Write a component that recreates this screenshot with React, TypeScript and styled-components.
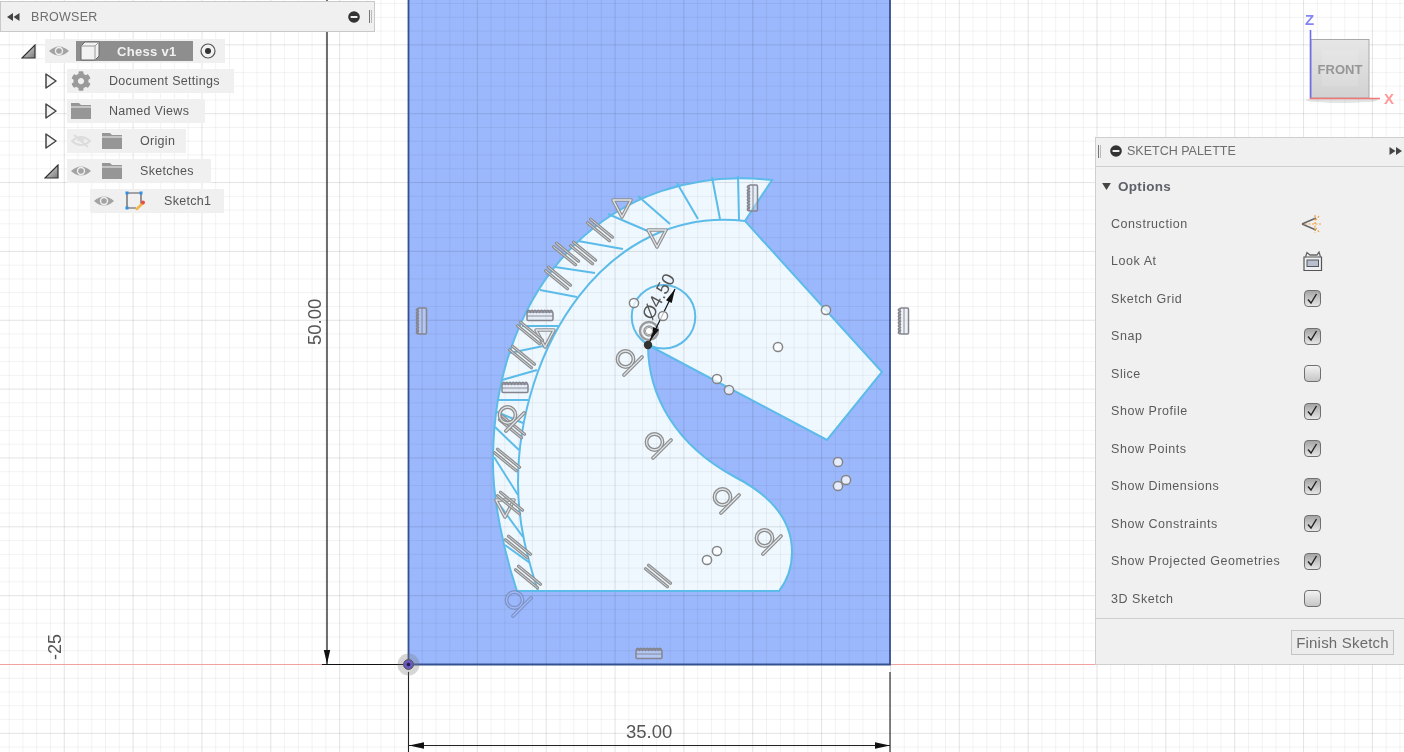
import React from 'react';
import styled, { createGlobalStyle } from 'styled-components';
import { FaCog } from 'react-icons/fa';

const GlobalStyle = createGlobalStyle`
  html, body {
    margin: 0;
    padding: 0;
    background: #fff;
    overflow: hidden;
  }
  body {
    font-family: "Liberation Sans", Arial, sans-serif;
  }
`;

const Viewport = styled.div`
  position: relative;
  width: 1404px;
  height: 752px;
  overflow: hidden;
  background: #fff;
  filter: blur(0.4px);
`;

const Canvas = styled.svg`
  position: absolute;
  inset: 0;
  display: block;
`;

const DimText = styled.text<{ $size?: number }>`
  font-family: "Liberation Sans", Arial, sans-serif;
  font-size: ${p => p.$size ?? 18.5}px;
  fill: #555;
`;

const CubeText = styled.text`
  font-family: "Liberation Sans", Arial, sans-serif;
  font-size: 13px;
  font-weight: 700;
  fill: #969696;
`;

const AxisText = styled.text<{ $color: string }>`
  font-family: "Liberation Sans", Arial, sans-serif;
  font-size: 15px;
  font-weight: 700;
  fill: ${p => p.$color};
`;

/* browser panel */
const BrowserPanel = styled.aside`
  position: absolute;
  left: 0;
  top: 1px;
  width: 375px;
`;

const BrowserHeader = styled.header`
  box-sizing: border-box;
  height: 31px;
  display: flex;
  align-items: center;
  padding: 0 2px 0 6px;
  background: #f0f0f0;
  border: 1px solid #c9c9c9;
  color: #6e6e6e;
  font-size: 12.5px;
  letter-spacing: 0.3px;
`;

const HeaderTitle = styled.span`
  flex: 1;
  margin-left: 11px;
`;

const Grip = styled.span`
  box-sizing: border-box;
  width: 3px;
  height: 13px;
  margin-left: 9px;
  border-left: 1px solid #777;
  border-right: 1px solid #bbb;
`;

const PaletteGrip = styled(Grip)`
  margin: 0 9px 0 2px;
`;

const Tree = styled.div`
  display: flex;
  flex-direction: column;
  gap: 6px;
  margin-top: 7px;
`;

const TreeRow = styled.div<{ $indent: number }>`
  display: flex;
  align-items: center;
  height: 24px;
  margin-left: ${p => p.$indent}px;
`;

const Expander = styled.span<{ $width: number }>`
  display: flex;
  align-items: center;
  width: ${p => p.$width}px;
`;

const RowBody = styled.div<{ $gap?: number; $end?: number }>`
  display: flex;
  align-items: center;
  gap: ${p => p.$gap ?? 11}px;
  height: 24px;
  padding: 0 ${p => p.$end ?? 14}px 0 4px;
  background: #f0f0f0;
  color: #555;
  font-size: 12.5px;
  letter-spacing: 0.3px;
  white-space: nowrap;
`;

const RowLabel = styled.span`
  margin-left: 7px;
`;

const RootBlock = styled.div`
  display: flex;
  align-items: center;
  box-sizing: border-box;
  width: 117px;
  height: 20px;
  padding-left: 4px;
  background: #8e8e8e;
  color: #f1f1f1;
  font-size: 13px;
  font-weight: 700;
  letter-spacing: 0.3px;
`;

const RootLabel = styled.span`
  margin-left: 17px;
`;

const GearIcon = styled(FaCog)`
  width: 20px;
  height: 20px;
  color: #9a9a9a;
`;

/* sketch palette */
const Palette = styled.aside`
  position: absolute;
  left: 1095px;
  top: 137px;
  box-sizing: border-box;
  width: 309px;
  height: 528px;
  background: #f0f0f0;
  border: 1px solid #cfcfcf;
  border-right: none;
  display: flex;
  flex-direction: column;
  color: #5b5b5b;
  font-size: 12.5px;
  letter-spacing: 0.55px;
`;

const PaletteHeader = styled.header`
  box-sizing: border-box;
  flex: 0 0 29px;
  display: flex;
  align-items: center;
  padding: 0 2px 2px 0;
  border-bottom: 1px solid #cfcfcf;
  color: #6e6e6e;
`;

const PaletteTitle = styled.span`
  flex: 1;
  margin-left: 5px;
  letter-spacing: 0;
`;

const SectionTitle = styled.div`
  flex: 0 0 38px;
  display: flex;
  align-items: center;
  gap: 7px;
  padding-left: 6px;
  font-size: 13.5px;
  font-weight: 700;
  letter-spacing: 0.3px;
  color: #5f6068;
`;

const OptionList = styled.div`
  display: grid;
  grid-auto-rows: 37.5px;
`;

const OptionRow = styled.div`
  display: grid;
  grid-template-columns: 189px 24px;
  align-items: center;
  padding-left: 15px;
`;

const OptionControl = styled.span`
  display: flex;
  justify-content: center;
  align-items: center;
`;

const CheckBox = styled.span<{ $checked: boolean }>`
  box-sizing: border-box;
  display: flex;
  align-items: center;
  justify-content: center;
  width: 17px;
  height: 17px;
  border: 1px solid #707070;
  border-radius: 4px;
  background: ${p =>
    p.$checked
      ? 'linear-gradient(#a4a4a4, #e6e6e6)'
      : 'linear-gradient(#f2f2f2, #c6c6c6)'};
`;

const PaletteFooter = styled.footer`
  flex: 1;
  display: flex;
  align-items: center;
  justify-content: flex-end;
  padding: 2px 10px 0;
  border-top: 1px solid #cfcfcf;
`;

const FinishButton = styled.button`
  box-sizing: border-box;
  width: 103px;
  height: 25px;
  padding: 0;
  background: #ececec;
  border: 1px solid #c4c4c4;
  color: #6b6b6b;
  font-family: inherit;
  font-size: 15px;
  letter-spacing: 0.2px;
`;

/* the drawing */
type Pt = [number, number];

const OUTER = 'M517 591 C505 555 492 500 493 457 C495 282 612 162 772 180';
const INNER = 'M538 591 C528 560 518 525 518 483 C518 350 605 205 745 221';
const THROAT = 'C648 395 675 445 735 477 C770 495 792 520 792 552 C792 568 786 582 779 591';
const PROFILE = `${OUTER} L745 221 L882 372 L827 440 L648 345 ${THROAT} Z`;

const RIBS: [number, number, number, number][] = [
  [738, 176, 739, 220], [712, 177, 720, 219], [677, 183, 698, 219], [638, 196, 670, 224],
  [608, 214, 650, 232], [578, 241, 623, 249], [555, 267, 595, 273], [540, 290, 577, 297],
  [522, 326, 558, 326], [510, 353, 548, 345], [502, 380, 537, 370], [498, 400, 528, 400],
  [497, 412, 523, 423], [495, 427, 519, 450], [494, 457, 518, 495], [496, 500, 523, 537],
  [505, 545, 530, 563],
];
const POINTS: Pt[] = [
  [634, 303], [663, 316], [826, 310], [778, 347], [717, 379], [729, 390],
  [838, 462], [846, 480], [838, 486], [707, 560], [717, 551],
];
const TANGENTS: Pt[] = [[628, 362], [657, 445], [725, 500], [767, 541], [517, 603], [510, 418]];
const PARALLELS: Pt[] = [
  [658, 576], [600, 230], [583, 253], [566, 254], [558, 278], [530, 333], [522, 357],
  [507, 460], [510, 503], [518, 547], [528, 577], [512, 427],
];
const TRIANGLES: Pt[] = [[622, 208], [657, 238], [545, 338], [505, 508]];
const RULERS: [number, number, number][] = [
  [752, 198, -90], [540, 315, 0], [515, 387, 0], [421, 321, -90], [903, 321, -90], [649, 653, 0],
];

const ORIGIN_X = 408.5;
const ORIGIN_Y = 664.5;
const STEP = 13.77;
const MINOR_LINE = 'rgba(0,0,0,.05)';
const MAJOR_LINE = 'rgba(0,0,0,.11)';

const GridLines = () => {
  const lines: React.ReactNode[] = [];
  for (let i = -30; i <= 72; i++) {
    const x = ORIGIN_X + i * STEP;
    if (x < 0 || x > 1404) continue;
    lines.push(
      <line key={`v${i}`} x1={x} y1={0} x2={x} y2={752}
        stroke={i % 5 === 0 ? MAJOR_LINE : MINOR_LINE} strokeWidth={1} />
    );
  }
  for (let j = -49; j <= 7; j++) {
    const y = ORIGIN_Y + j * STEP;
    if (y < 0 || y > 752) continue;
    lines.push(
      <line key={`h${j}`} x1={0} y1={y} x2={1404} y2={y}
        stroke={j % 5 === 0 ? MAJOR_LINE : MINOR_LINE} strokeWidth={1} />
    );
  }
  return <g>{lines}</g>;
};

const GLYPH = { fill: 'none', strokeLinecap: 'round', strokeLinejoin: 'round' } as const;

/* constraint glyphs are a thick grey stroke with a pale core */
const Tangent = ({ x, y, dim }: { x: number; y: number; dim?: boolean }) => {
  const paint = (stroke: string, width: number) => (
    <g {...GLYPH} stroke={stroke} strokeWidth={width}>
      <circle cx={-2.5} cy={-3} r={8} />
      <path d="M-4 13 L14 -5" />
    </g>
  );
  return (
    <g transform={`translate(${x} ${y})`} opacity={dim ? 0.65 : 1}>
      {paint(dim ? '#6f7fae' : '#8c8c8c', 3.8)}
      {paint(dim ? '#a7bdf5' : '#dfe5ea', 1.3)}
    </g>
  );
};

const Parallel = ({ x, y }: { x: number; y: number }) => {
  const paint = (stroke: string, width: number) => (
    <g {...GLYPH} stroke={stroke} strokeWidth={width}>
      <path d="M-12.5 -7.2 L9.5 10.8" />
      <path d="M-9.5 -10.8 L12.5 7.2" />
    </g>
  );
  return (
    <g transform={`translate(${x} ${y})`}>
      {paint('#8f8f8f', 3.2)}
      {paint('#cfd6dc', 1)}
    </g>
  );
};

const Triangle = ({ x, y }: { x: number; y: number }) => {
  const d = 'M-9 -8 L9 -8 L0 9 Z';
  return (
    <g transform={`translate(${x} ${y})`} {...GLYPH}>
      <path d={d} stroke="#8f8f8f" strokeWidth={3.6} />
      <path d={d} stroke="#dfe5ea" strokeWidth={1.3} />
    </g>
  );
};

const Ruler = ({ x, y, angle }: { x: number; y: number; angle: number }) => (
  <g transform={`translate(${x} ${y}) rotate(${angle})`} fill="none" stroke="#85858f" strokeWidth={1.5}>
    <rect x={-13} y={-3} width={26} height={8.5} rx={1.2} fill="rgba(215,222,235,.4)" />
    <path d="M-13 1 H13" strokeWidth={0.9} />
    <path d="M-13 -3 q1.6 -3.4 3.2 0 q1.6 -3.4 3.2 0 q1.6 -3.4 3.2 0 q1.6 -3.4 3.2 0 q1.6 -3.4 3.2 0 q1.6 -3.4 3.2 0 q1.6 -3.4 3.2 0 q1.6 -3.4 3.2 0" />
  </g>
);

const ArrowHead = ({ x, y, angle, len = 14 }: { x: number; y: number; angle: number; len?: number }) => (
  <path transform={`translate(${x} ${y}) rotate(${angle})`} d={`M0 0 L${-len} -3.2 L${-len} 3.2 Z`} fill="#111" />
);

const SketchDrawing = () => (
  <Canvas width={1404} height={752} viewBox="0 0 1404 752">
    <rect x={ORIGIN_X} y={-2} width={481.5} height={666.5} fill="#9bb8fc" />
    <path d={PROFILE} fill="#eff8fe" />
    <GridLines />

    {/* axis */}
    <path d="M0 664.5 H322 M890 664.5 H1096" stroke="#f2a0a0" strokeWidth={1} />

    {/* rectangle edges */}
    <path d="M408.5 0 V664.5 H890 V0" fill="none" stroke="#35508f" strokeWidth={1.8} />

    {/* profile outline */}
    <g fill="none" stroke="#5cbbe9" strokeWidth={2}>
      <path d={PROFILE} />
      <path d={INNER} />
      {RIBS.map(([a, b, c, d]) => (
        <line key={`${a}-${b}`} x1={a} y1={b} x2={c} y2={d} />
      ))}
      <circle cx={663.5} cy={316.7} r={31.8} />
    </g>

    {/* constraints */}
    {TRIANGLES.map(([x, y]) => <Triangle key={`${x}-${y}`} x={x} y={y} />)}
    {PARALLELS.map(([x, y]) => <Parallel key={`${x}-${y}`} x={x} y={y} />)}
    {RULERS.map(([x, y, a]) => <Ruler key={`${x}-${y}`} x={x} y={y} angle={a} />)}
    {TANGENTS.map(([x, y]) => <Tangent key={`${x}-${y}`} x={x} y={y} dim={y > 600} />)}
    <g fill="none" stroke="#9a9a9a">
      <circle cx={649} cy={331} r={9} strokeWidth={2.4} />
      <circle cx={649} cy={331} r={5} strokeWidth={1.6} />
    </g>

    {/* circle diameter */}
    <line x1={648} y1={345} x2={675} y2={289} stroke="#111" strokeWidth={1.2} />
    <ArrowHead x={675} y={289} angle={-64} />
    <ArrowHead x={650} y={341} angle={116} />
    <DimText $size={18} transform="translate(652 321) rotate(-61)">Ø4.50</DimText>

    {/* sketch points */}
    {POINTS.map(([x, y]) => (
      <circle key={`${x}-${y}`} cx={x} cy={y} r={4.6} fill="rgba(255,255,255,.75)" stroke="#858585" strokeWidth={1.5} />
    ))}
    <circle cx={649} cy={331} r={3.6} fill="#fff" stroke="#999" />
    <circle cx={648} cy={345} r={4.2} fill="#333" />

    {/* 50.00 dimension */}
    <path d="M327 0 V664 M322 664.5 H408" stroke="#111" strokeWidth={1.2} fill="none" />
    <path d="M327 664 L323.8 650 L330.2 650 Z" fill="#111" />
    <DimText transform="translate(321 345) rotate(-90)">50.00</DimText>
    <DimText $size={18} transform="translate(61 660) rotate(-90)">-25</DimText>

    {/* 35.00 dimension */}
    <path d="M408.5 672 V752 M890 672 V752 M408.5 745.5 H890" stroke="#222" strokeWidth={1.1} fill="none" />
    <path d="M409 745.5 L424 742.3 L424 748.7 Z M890 745.5 L875 742.3 L875 748.7 Z" fill="#111" />
    <DimText x={626} y={738}>35.00</DimText>

    {/* origin */}
    <circle cx={408.5} cy={664.5} r={11} fill="rgba(120,120,120,.3)" />
    <circle cx={408.5} cy={664.5} r={5} fill="#6a58bd" stroke="#5a5a5a" />
    <circle cx={408.5} cy={664.5} r={1.8} fill="#1d1d4a" />

    {/* view cube */}
    <defs>
      <linearGradient id="cube" x1="0" y1="0" x2="0" y2="1">
        <stop offset="0" stopColor="#e6e6e6" />
        <stop offset="1" stopColor="#d2d2d2" />
      </linearGradient>
    </defs>
    <ellipse cx={1342} cy={100} rx={36} ry={3} fill="rgba(0,0,0,.1)" />
    <rect x={1311} y={39.5} width={58} height={58.5} fill="url(#cube)" stroke="#a9a9a9" />
    <rect x={1322} y={50} width={36} height={36} fill="rgba(255,255,255,.12)" />
    <CubeText x={1340} y={74} textAnchor="middle">FRONT</CubeText>
    <path d="M1310.5 30 V99" stroke="#6c6cf0" strokeWidth={1.6} />
    <path d="M1310 98.5 H1380" stroke="#f27878" strokeWidth={1.6} />
    <AxisText $color="#8585f5" x={1305} y={25}>Z</AxisText>
    <AxisText $color="#f99" x={1384} y={104}>X</AxisText>
  </Canvas>
);

/* small icons */
const DoubleArrow = ({ dir }: { dir: 'left' | 'right' }) => (
  <svg width={13} height={8} viewBox="0 0 13 8" style={dir === 'left' ? undefined : { transform: 'scaleX(-1)' }}>
    <path d="M0 4 L6 0 V8 Z M6.5 4 L12.5 0 V8 Z" fill="#444" />
  </svg>
);

const MinusDisc = () => (
  <svg width={12} height={12} viewBox="0 0 12 12">
    <circle cx={6} cy={6} r={5.8} fill="#333" />
    <rect x={2.6} y={5} width={6.8} height={2} fill="#f0f0f0" />
  </svg>
);

const Eye = ({ off }: { off?: boolean }) => (
  <svg width={20} height={14} viewBox="0 0 20 14">
    {off ? (
      <g fill="none" stroke="#dcdcdc" strokeWidth={2}>
        <path d="M1 7 Q10 -1 19 7 Q10 15 1 7 Z" />
        <path d="M3 1 L17 13" />
        <path d="M7 7 Q10 3 13 7" />
      </g>
    ) : (
      <g>
        <path d="M0 7 Q10 -2 20 7 Q10 16 0 7 Z" fill="#a3a3a3" />
        <circle cx={10} cy={7} r={4.2} fill="#f0f0f0" />
        <circle cx={10} cy={7} r={2.8} fill="#a3a3a3" />
      </g>
    )}
  </svg>
);

const Folder = () => (
  <svg width={20} height={16} viewBox="0 0 20 16">
    <path d="M0 0 H8 L10 2 H20 V3.4 H0 Z M0 4.4 H20 V16 H0 Z" fill="#969696" />
  </svg>
);

const Expanded = () => (
  <svg width={15} height={15} viewBox="0 0 15 15">
    <defs>
      <linearGradient id="tri" x1="0" y1="0" x2="1" y2="1">
        <stop offset="0" stopColor="#eee" />
        <stop offset="1" stopColor="#777" />
      </linearGradient>
    </defs>
    <path d="M1 14 L14 1 V14 Z" fill="url(#tri)" stroke="#333" strokeWidth={1.2} />
  </svg>
);

const Collapsed = () => (
  <svg width={12} height={16} viewBox="0 0 12 16">
    <path d="M1 1 L11 8 L1 15 Z" fill="#f4f4f4" stroke="#444" strokeWidth={1.5} strokeLinejoin="round" />
  </svg>
);

const ComponentBox = () => (
  <svg width={20} height={20} viewBox="0 0 20 20">
    <path d="M1 5 L5 1 H19 V15 L15 19 H1 Z" fill="#f2f2f2" stroke="#6a6a6a" strokeWidth={1} strokeLinejoin="round" />
    <path d="M1 5 H15 V19 M15 5 L19 1" fill="none" stroke="#9a9a9a" strokeWidth={1} />
  </svg>
);

const ActiveTarget = () => (
  <svg width={16} height={16} viewBox="0 0 16 16">
    <circle cx={8} cy={8} r={7} fill="#f2f2f2" stroke="#555" strokeWidth={1.2} />
    <circle cx={8} cy={8} r={3} fill="#333" />
  </svg>
);

const SketchIcon = () => (
  <svg width={21} height={20} viewBox="0 0 21 20">
    <path d="M2 2 H16 V14 M2 2 V17 H11" fill="none" stroke="#555" strokeWidth={1.2} />
    <g fill="#2f8fe8">
      <rect x={0.5} y={0.5} width={3} height={3} />
      <rect x={14.5} y={0.5} width={3} height={3} />
      <rect x={0.5} y={15.5} width={3} height={3} />
    </g>
    <path d="M10 18 L17 11 L19 13 L12 19.5 Z" fill="#f0b64a" />
    <circle cx={18} cy={11.5} r={2} fill="#ee4b3f" />
  </svg>
);

const ConstructionIcon = () => (
  <svg width={22} height={20} viewBox="0 0 22 20">
    <path d="M1 10 L15 4 M1 10 L15 16" stroke="#666" strokeWidth={1.4} fill="none" />
    <path d="M4 10 H21 M14 1 V19 M18 2 L15 6 M18 18 L15 14" stroke="#f0a040" strokeWidth={1.2} strokeDasharray="2 1.5" fill="none" />
  </svg>
);

const LookAtIcon = () => (
  <svg width={21} height={20} viewBox="0 0 21 20">
    <path d="M2 6 V19.5 H19.5 V6 Z" fill="#eef0f3" stroke="#555" strokeWidth={1.2} />
    <rect x={5} y={9} width={11.5} height={6.5} fill="#b8c0cf" stroke="#555" />
    <path d="M3.5 6 L5 1.5 L8 4 L15 4 L17 1 L18.5 6" fill="none" stroke="#666" strokeWidth={1.3} />
  </svg>
);

const CheckMark = () => (
  <svg width={12} height={12} viewBox="0 0 12 12">
    <path d="M2 6.5 L5 10 L10.5 1" fill="none" stroke="#222" strokeWidth={1.4} />
  </svg>
);

const CaretDown = () => (
  <svg width={9} height={7} viewBox="0 0 10 8">
    <path d="M0 0 H10 L5 8 Z" fill="#444" />
  </svg>
);

const OPTIONS: { label: string; checked?: boolean; icon?: React.ReactNode }[] = [
  { label: 'Construction', icon: <ConstructionIcon /> },
  { label: 'Look At', icon: <LookAtIcon /> },
  { label: 'Sketch Grid', checked: true },
  { label: 'Snap', checked: true },
  { label: 'Slice', checked: false },
  { label: 'Show Profile', checked: true },
  { label: 'Show Points', checked: true },
  { label: 'Show Dimensions', checked: true },
  { label: 'Show Constraints', checked: true },
  { label: 'Show Projected Geometries', checked: true },
  { label: '3D Sketch', checked: false },
];

const Browser = () => (
  <BrowserPanel>
    <BrowserHeader>
      <DoubleArrow dir="left" />
      <HeaderTitle>BROWSER</HeaderTitle>
      <MinusDisc />
      <Grip />
    </BrowserHeader>
    <Tree>
      <TreeRow $indent={21}>
        <Expander $width={24}><Expanded /></Expander>
        <RowBody $gap={7} $end={9}>
          <Eye />
          <RootBlock>
            <ComponentBox />
            <RootLabel>Chess v1</RootLabel>
          </RootBlock>
          <ActiveTarget />
        </RowBody>
      </TreeRow>
      <TreeRow $indent={45}>
        <Expander $width={22}><Collapsed /></Expander>
        <RowBody>
          <GearIcon />
          <RowLabel>Document Settings</RowLabel>
        </RowBody>
      </TreeRow>
      <TreeRow $indent={45}>
        <Expander $width={22}><Collapsed /></Expander>
        <RowBody $end={16}>
          <Folder />
          <RowLabel>Named Views</RowLabel>
        </RowBody>
      </TreeRow>
      <TreeRow $indent={45}>
        <Expander $width={22}><Collapsed /></Expander>
        <RowBody $end={11}>
          <Eye off />
          <Folder />
          <RowLabel>Origin</RowLabel>
        </RowBody>
      </TreeRow>
      <TreeRow $indent={44}>
        <Expander $width={23}><Expanded /></Expander>
        <RowBody $end={17}>
          <Eye />
          <Folder />
          <RowLabel>Sketches</RowLabel>
        </RowBody>
      </TreeRow>
      <TreeRow $indent={90}>
        <RowBody $end={13}>
          <Eye />
          <SketchIcon />
          <RowLabel>Sketch1</RowLabel>
        </RowBody>
      </TreeRow>
    </Tree>
  </BrowserPanel>
);

const SketchPalette = () => (
  <Palette>
    <PaletteHeader>
      <PaletteGrip />
      <MinusDisc />
      <PaletteTitle>SKETCH PALETTE</PaletteTitle>
      <DoubleArrow dir="right" />
    </PaletteHeader>
    <SectionTitle>
      <CaretDown />
      Options
    </SectionTitle>
    <OptionList>
      {OPTIONS.map(o => (
        <OptionRow key={o.label}>
          <span>{o.label}</span>
          <OptionControl>
            {o.icon ?? <CheckBox $checked={!!o.checked}>{o.checked && <CheckMark />}</CheckBox>}
          </OptionControl>
        </OptionRow>
      ))}
    </OptionList>
    <PaletteFooter>
      <FinishButton>Finish Sketch</FinishButton>
    </PaletteFooter>
  </Palette>
);

export default function App() {
  return (
    <>
      <GlobalStyle />
      <Viewport>
        <SketchDrawing />
        <Browser />
        <SketchPalette />
      </Viewport>
    </>
  );
}
